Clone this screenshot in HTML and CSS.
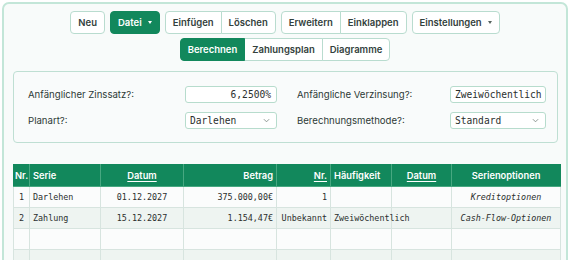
FILE: index.html
```html
<!DOCTYPE html>
<html lang="de">
<head>
<meta charset="utf-8">
<title>Zahlungsplan</title>
<link rel="stylesheet" href="styles.css">
</head>
<body>
<div class="app">
  <div class="toolbar">
    <button class="btn">Neu</button>
    <button class="btn primary">Datei <span class="caret"></span></button>
    <div class="group">
      <button class="btn">Einfügen</button>
      <button class="btn">Löschen</button>
    </div>
    <div class="group">
      <button class="btn">Erweitern</button>
      <button class="btn">Einklappen</button>
    </div>
    <button class="btn">Einstellungen <span class="caret dark"></span></button>
  </div>
  <div class="toolbar tabs">
    <div class="group">
      <button class="btn primary">Berechnen</button>
      <button class="btn">Zahlungsplan</button>
      <button class="btn">Diagramme</button>
    </div>
  </div>

  <div class="panel">
    <div class="field">
      <span class="label">Anfänglicher Zinssatz?:</span>
      <span class="input num w1">6,2500%</span>
    </div>
    <div class="field">
      <span class="label">Anfängliche Verzinsung?:</span>
      <span class="input w2">Zweiwöchentlich</span>
    </div>
    <div class="field">
      <span class="label">Planart?:</span>
      <span class="input select w1">Darlehen<svg class="chev" viewBox="0 0 8 5" width="7" height="5"><path d="M1 1l3 3 3-3" fill="none" stroke="#808a86" stroke-width="1"/></svg></span>
    </div>
    <div class="field">
      <span class="label">Berechnungsmethode?:</span>
      <span class="input select w2">Standard<svg class="chev" viewBox="0 0 8 5" width="7" height="5"><path d="M1 1l3 3 3-3" fill="none" stroke="#808a86" stroke-width="1"/></svg></span>
    </div>
  </div>

  <table class="grid">
    <colgroup>
      <col style="width:16px"><col style="width:71px"><col style="width:83px"><col style="width:93px">
      <col style="width:54px"><col style="width:61px"><col style="width:60px"><col style="width:109px">
    </colgroup>
    <thead>
      <tr>
        <th class="c">Nr.</th>
        <th class="l">Serie</th>
        <th class="c"><u>Datum</u></th>
        <th class="r">Betrag</th>
        <th class="r"><u>Nr.</u></th>
        <th class="l">Häufigkeit</th>
        <th class="c"><u>Datum</u></th>
        <th class="c">Serienoptionen</th>
      </tr>
    </thead>
    <tbody>
      <tr>
        <td class="c">1</td>
        <td class="l">Darlehen</td>
        <td class="c">01.12.2027</td>
        <td class="r">375.000,00€</td>
        <td class="r">1</td>
        <td class="l"></td>
        <td></td>
        <td class="c it">Kreditoptionen</td>
      </tr>
      <tr class="alt">
        <td class="c">2</td>
        <td class="l">Zahlung</td>
        <td class="c">15.12.2027</td>
        <td class="r">1.154,47€</td>
        <td class="r">Unbekannt</td>
        <td class="l over">Zweiwöchentlich</td>
        <td></td>
        <td class="c it">Cash-Flow-Optionen</td>
      </tr>
      <tr><td></td><td></td><td></td><td></td><td></td><td></td><td></td><td></td></tr>
      <tr class="alt"><td></td><td></td><td></td><td></td><td></td><td></td><td></td><td></td></tr>
      <tr><td></td><td></td><td></td><td></td><td></td><td></td><td></td><td></td></tr>
    </tbody>
  </table>
</div>
</body>
</html>
```

FILE: styles.css
```css
* { box-sizing: border-box; }
html, body { margin: 0; padding: 0; background: #ffffff; overflow: hidden; }
body { font-family: Inter, "Noto Sans", sans-serif; color: #2c3a35; }

.app {
  margin: 2px;
  height: 300px;
  border: 2px solid #c3e6d8;
  border-radius: 7px;
  background: #f8fbfa;
  padding: 7px 7px 0 7px;
}

.toolbar {
  display: flex;
  justify-content: center;
  gap: 5px;
}
.tabs { margin-top: 4px; }

.group { display: flex; }
.group .btn { border-radius: 0; }
.group .btn + .btn { margin-left: -1px; }
.group .btn:first-child { border-radius: 4px 0 0 4px; }
.group .btn:last-child { border-radius: 0 4px 4px 0; }

.btn {
  height: 23px;
  padding: 0 7px;
  border: 1px solid #b9dccf;
  border-radius: 4px;
  background: #ffffff;
  color: #33413c;
  font-family: Inter, sans-serif;
  font-size: 9.5px;
  font-weight: 600;
  display: inline-flex;
  align-items: center;
  gap: 6px;
  cursor: pointer;
}
.btn.primary {
  background: #12885c;
  border-color: #12885c;
  color: #ffffff;
  position: relative;
  z-index: 1;
}
.caret {
  width: 0; height: 0;
  border-left: 2.5px solid transparent;
  border-right: 2.5px solid transparent;
  border-top: 3px solid #ffffff;
}
.caret.dark { border-top-color: #55625d; }

.panel {
  margin: 10px 1px 0 2px;
  border: 1px solid #bfdfd3;
  border-radius: 4px;
  background: #f9fbfb;
  padding: 14px 13px 13px 14px;
  display: grid;
  grid-template-columns: 249px 249px;
  column-gap: 20px;
  row-gap: 9px;
}
.field {
  display: flex;
  align-items: center;
  justify-content: space-between;
  height: 17px;
}
.label { font-size: 9.6px; color: #2d3a36; }
.input {
  height: 17px;
  border: 1px solid #b7dccd;
  border-radius: 3px;
  background: #ffffff;
  font-family: "DejaVu Sans Mono", monospace;
  font-size: 9.6px;
  color: #2b2f2e;
  display: flex;
  align-items: center;
  padding: 0 4px;
  white-space: nowrap;
  overflow: hidden;
}
.w1 { width: 92px; }
.w2 { width: 96px; }
.num { justify-content: flex-end; padding-right: 5px; }
.select { justify-content: space-between; padding-right: 6px; }
.chev { flex: none; }

.grid {
  margin: 21px 0 0 2px;
  width: 547px;
  table-layout: fixed;
  border-collapse: collapse;
  font-family: "DejaVu Sans Mono", monospace;
  font-size: 8.4px;
  color: #2b2f2e;
}
.grid th {
  height: 22px;
  background: #12885c;
  color: #ffffff;
  font-family: Inter, sans-serif;
  font-size: 9.3px;
  font-weight: 600;
  border: 1px solid #47a881;
  border-top-color: #12885c;
  padding: 0 3px;
  white-space: nowrap;
  overflow: hidden;
}
.grid th:first-child { border-left-color: #12885c; padding: 0 1px; }
.grid th:last-child { border-right-color: #12885c; }
.grid th u { text-underline-offset: 2px; }
.grid td {
  height: 21px;
  background: #fbfcfc;
  border: 1px solid #d7e4df;
  padding: 0 3px;
  white-space: nowrap;
}
.grid tr.alt td { background: #eef4f1; }
.grid td.over { overflow: visible; position: relative; z-index: 1; }
.c { text-align: center; }
.l { text-align: left; }
.r { text-align: right; }
.it { font-style: italic; }
```
